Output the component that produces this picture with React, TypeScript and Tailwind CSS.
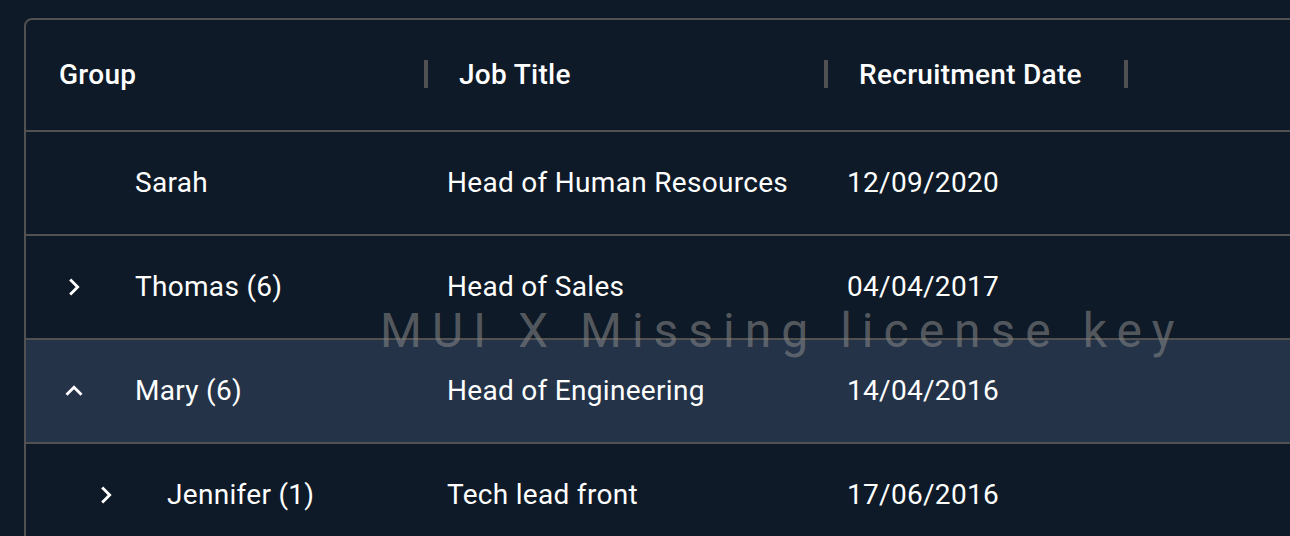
import React from "react";

type Row = {
  name: string;
  title: string;
  date: string;
  depth: number;
  toggle?: "closed" | "open";
  active?: boolean;
};

const rows: Row[] = [
  { name: "Sarah", title: "Head of Human Resources", date: "12/09/2020", depth: 0 },
  { name: "Thomas (6)", title: "Head of Sales", date: "04/04/2017", depth: 0, toggle: "closed" },
  { name: "Mary (6)", title: "Head of Engineering", date: "14/04/2016", depth: 0, toggle: "open", active: true },
  { name: "Jennifer (1)", title: "Tech lead front", date: "17/06/2016", depth: 1, toggle: "closed" },
];

const columns = [
  { label: "Group", width: "w-[400px]" },
  { label: "Job Title", width: "w-[400px]" },
  { label: "Recruitment Date", width: "w-[300px]" },
];

function Chevron({ dir }: { dir: "closed" | "open" }) {
  return (
    <svg viewBox="0 0 24 24" className="h-[34px] w-[34px] fill-white">
      {dir === "closed" ? (
        <path d="M8.59 16.59 13.17 12 8.59 7.41 10 6l6 6-6 6z" />
      ) : (
        <path d="M7.41 15.41 12 10.83l4.59 4.58L18 14l-6-6-6 6z" />
      )}
    </svg>
  );
}

export default function App() {
  return (
    <div
      className="h-[536px] w-[1290px] overflow-hidden bg-[#0e1a27] pl-[24px] pt-[18px] text-white"
      style={{ fontFamily: "Roboto, 'Liberation Sans', sans-serif" }}
    >
      <div className="relative w-[1540px] rounded-lg border-2 border-[#515151] text-[28px] tracking-[0.01071em]">
        {/* header */}
        <div className="flex h-[112px] border-b-2 border-[#515151]">
          {columns.map((c) => (
            <div
              key={c.label}
              className={`relative flex items-center pl-[33px] font-medium ${c.width}`}
            >
              {c.label}
              <span className="absolute right-[-2px] top-[40px] h-[28px] w-[4px] bg-[#515151]" />
            </div>
          ))}
          <div className="flex-1" />
        </div>

        {/* rows */}
        {rows.map((r) => (
          <div
            key={r.name}
            className={`flex h-[104px] border-b-2 border-[#515151] ${
              r.active ? "bg-[#243348]" : ""
            }`}
          >
            <div className="flex w-[400px] items-center px-[20px]">
              <div className={`flex items-center ${r.depth === 1 ? "ml-[32px]" : ""}`}>
                <div className="flex w-[56px] justify-center">
                  {r.toggle && <Chevron dir={r.toggle} />}
                </div>
                <span className="ml-[33px]">{r.name}</span>
              </div>
            </div>
            <div className="flex w-[400px] items-center px-[21px]">{r.title}</div>
            <div className="flex w-[300px] items-center px-[21px]">{r.date}</div>
            <div className="flex-1" />
          </div>
        ))}

        <div className="pointer-events-none absolute left-[354px] top-[283px] whitespace-nowrap text-[48px] leading-[56px] tracking-[10px] text-[#8282829e]">
          MUI X Missing license key
        </div>
      </div>
    </div>
  );
}
